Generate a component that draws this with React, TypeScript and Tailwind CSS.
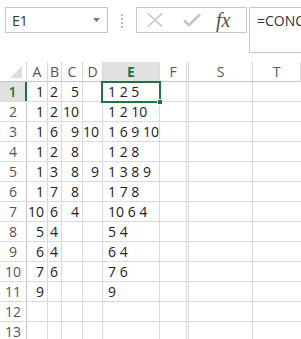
import React from "react";

const FONT = { fontFamily: '"Open Sans", "Noto Sans", Arial, sans-serif' };

const cols = ["A", "B", "C", "D", "E", "F", "S", "T"];

const rows: string[][] = [
  ["1", "2", "5", "", "1 2 5"],
  ["1", "2", "10", "", "1 2 10"],
  ["1", "6", "9", "10", "1 6 9 10"],
  ["1", "2", "8", "", "1 2 8"],
  ["1", "3", "8", "9", "1 3 8 9"],
  ["1", "7", "8", "", "1 7 8"],
  ["10", "6", "4", "", "10 6 4"],
  ["5", "4", "", "", "5 4"],
  ["6", "4", "", "", "6 4"],
  ["7", "6", "", "", "7 6"],
  ["9", "", "", "", "9"],
  ["", "", "", "", ""],
  ["", "", "", "", ""],
];

const FormulaBar = () => (
  <div className="flex items-start h-[62px] pt-[7px] pl-[5px] bg-white">
    <div className="flex items-center justify-between w-[103px] h-[26px] border border-[#c6c6c6] pl-[6px] pr-[7px] text-[14px] text-[#333]">
      <span>E1</span>
      <svg width="7" height="4" viewBox="0 0 7 4">
        <path d="M0 0H7L3.5 4Z" fill="#777" />
      </svg>
    </div>
    <div className="flex flex-col gap-[2px] ml-[13px] mt-[7px]">
      <span className="w-[2px] h-[2px] bg-[#b8b8b8]" />
      <span className="w-[2px] h-[2px] bg-[#b8b8b8]" />
      <span className="w-[2px] h-[2px] bg-[#b8b8b8]" />
      <span className="w-[2px] h-[2px] bg-[#b8b8b8]" />
    </div>
    <div className="flex items-center w-[111px] h-[26px] border border-[#c6c6c6] ml-[13px]">
      <svg className="ml-[10px]" width="16" height="14" viewBox="0 0 16 14">
        <path d="M1 0.5L15 13.5M15 0.5L1 13.5" stroke="#c4c4c4" strokeWidth="1.6" />
      </svg>
      <svg className="ml-[20px]" width="18" height="14" viewBox="0 0 18 14">
        <path d="M1 7.5L6 12L17 1.5" stroke="#c4c4c4" strokeWidth="2.6" fill="none" />
      </svg>
      <span
        className="ml-[15px] text-[20px] italic text-[#505050] leading-none"
        style={{ fontFamily: '"Liberation Serif", "DejaVu Serif", serif' }}
      >
        fx
      </span>
    </div>
    <div className="flex-1 h-[46px] border border-r-0 border-[#c6c6c6] ml-[2px] pl-[7px] pt-[2px] text-[14px] text-[#333] whitespace-nowrap overflow-hidden">
      =CONC
    </div>
  </div>
);

const colW = [
  "w-[27px]",
  "w-[21px]",
  "w-[14px]",
  "w-[21px]",
  "w-[20px]",
  "w-[57px]",
  "w-[29px]",
  "w-[64px]",
  "flex-1",
];

const Sheet = () => (
  <div className="relative bg-white">
    <div className="flex h-[20px] border-b border-[#c6c6c6]">
      <div className={`${colW[0]} relative border-r border-[#d9d9d9]`}>
        <svg className="absolute right-[4px] bottom-[3px]" width="12" height="12" viewBox="0 0 12 12">
          <path d="M12 0V12H0Z" fill="#dedede" />
        </svg>
      </div>
      {cols.map((c, i) => (
        <div
          key={c}
          className={`${colW[i + 1]} flex items-center justify-center text-[14px] ${
            c === "F" ? "border-r-[3px] border-double" : "border-r"
          } border-[#d9d9d9] ${
            c === "E" ? "bg-[#e1e1e1] text-[#217346] font-bold" : "text-[#555]"
          }`}
        >
          {c}
        </div>
      ))}
    </div>
    {rows.map((r, ri) => (
      <div key={ri} className="flex h-[20px] border-b border-[#dadada] text-[14px] text-[#222]">
        <div
          className={`${colW[0]} flex items-center justify-center ${
            ri === 0
              ? "bg-[#e1e1e1] text-[#217346] font-semibold border-r-2 border-[#217346]"
              : "text-[#555] border-r border-[#c6c6c6]"
          }`}
        >
          {ri + 1}
        </div>
        {r.slice(0, 4).map((v, ci) => (
          <div
            key={ci}
            className={`${colW[ci + 1]} flex items-center justify-end pr-[3px] border-r border-[#dadada] whitespace-nowrap`}
          >
            {v}
          </div>
        ))}
        <div className={`${colW[5]} flex items-center pl-[5px] border-r border-[#dadada] whitespace-nowrap`}>
          {r[4]}
        </div>
        <div className={`${colW[6]} border-r-[3px] border-double border-[#dadada]`} />
        <div className={`${colW[7]} border-r border-[#dadada]`} />
        <div className={colW[8]} />
      </div>
    ))}
    <div className="absolute left-[101px] top-[19px] w-[60px] h-[22px] border-2 border-[#217346]" />
    <div className="absolute left-[157px] top-[37px] w-[6px] h-[6px] bg-[#217346] border border-white" />
  </div>
);

export default function App() {
  return (
    <div className="w-[301px] h-[339px] overflow-hidden bg-white" style={FONT}>
      <FormulaBar />
      <Sheet />
    </div>
  );
}
